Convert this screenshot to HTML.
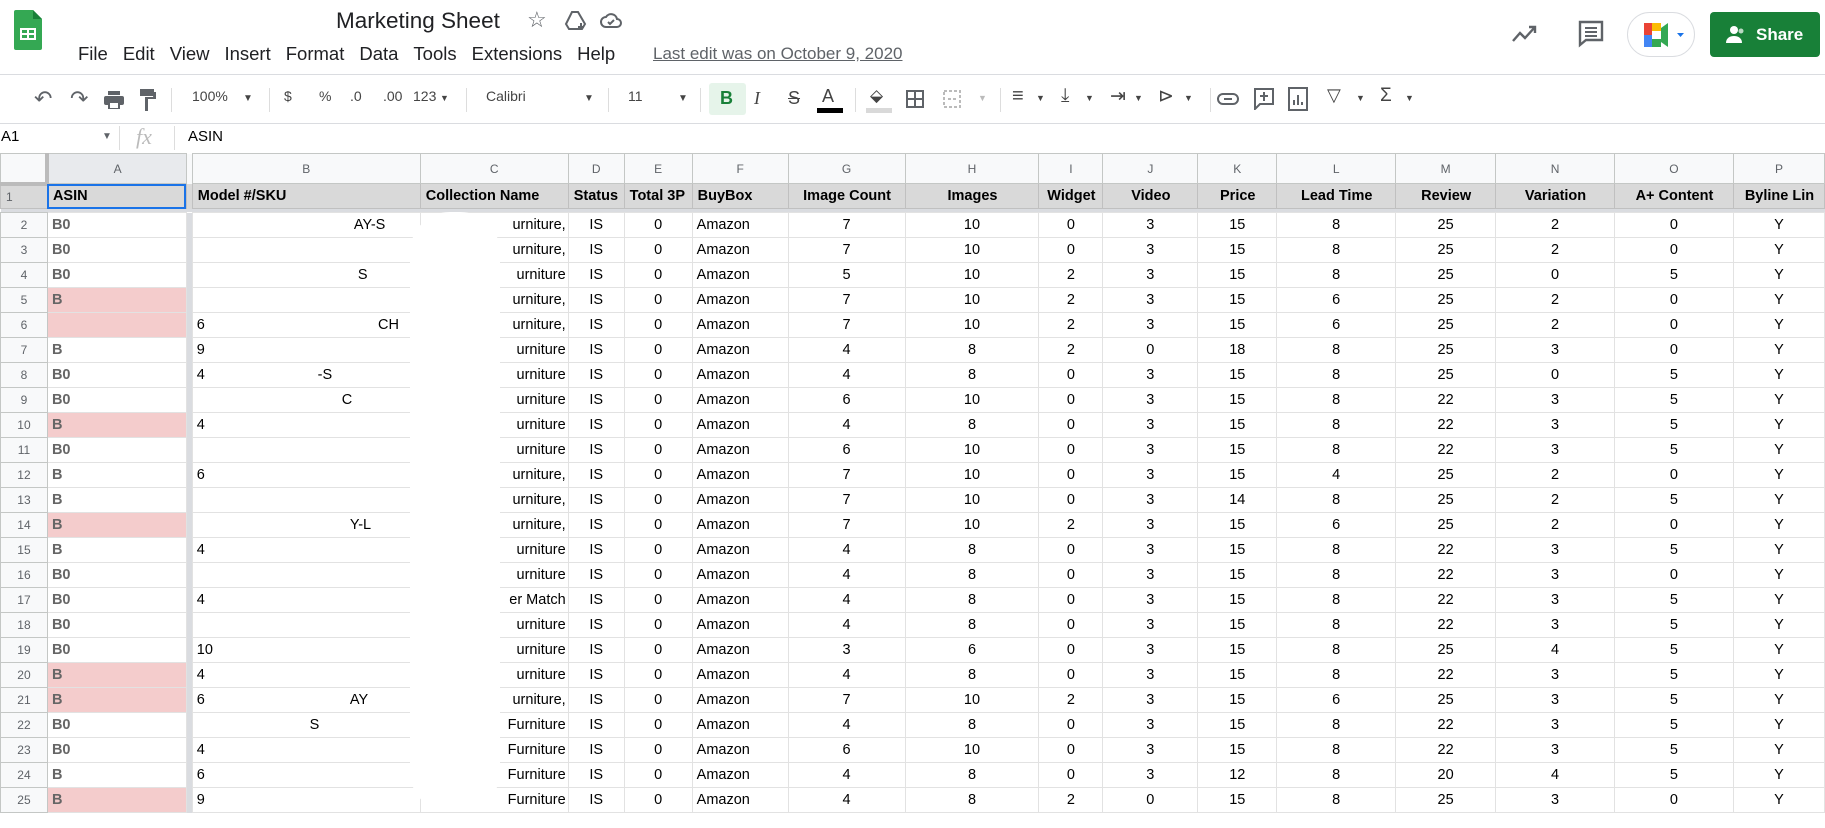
<!DOCTYPE html>
<html><head><meta charset="utf-8"><style>
*{margin:0;padding:0;box-sizing:border-box}
body{width:1825px;height:828px;overflow:hidden;background:#fff;font-family:"Liberation Sans",Arial,sans-serif;color:#000;position:relative}
.a{position:absolute}
.menu span{margin-right:15px}
.tb{position:absolute;top:88px;font-size:14px;color:#444}
.sep{position:absolute;top:88px;width:1px;height:24px;background:#ddd}
table{position:absolute;left:0;top:153px;border-collapse:collapse;table-layout:fixed;font-size:14.5px}
td{border:1px solid #e2e2e2;height:25px;padding:0 4px;white-space:nowrap;overflow:hidden;text-align:center}
tr.h td{height:30px;background:#f8f9fa;color:#5f6368;font-size:12px;border-color:#c4c7c5}
tr.r1 td{background:#d9d9d9;font-weight:bold;text-align:left;border-color:#c0c0c0;padding-left:5px}
tr.sp td{height:4px;background:#dadce0;border:none;padding:0}
td.n{background:#f8f9fa;color:#5f6368;font-size:12px;border-color:#c4c7c5;text-align:center}
td.g{background:#dadce0;border:none;padding:0}
td.A{text-align:left;color:#666;font-weight:bold}
td.p{background:#f4cccc}
td.L{text-align:left}
td.C{text-align:right;padding-right:2px}
</style></head><body>
<svg class="a" style="left:14px;top:10px" width="28" height="40" viewBox="0 0 28 40"><path d="M2 0h17l9 9v29a2 2 0 0 1-2 2H2a2 2 0 0 1-2-2V2a2 2 0 0 1 2-2z" fill="#34a853"/><path d="M19 0v9h9z" fill="#188038"/><rect x="6" y="18" width="16" height="12" fill="#fff"/><rect x="8" y="20" width="5" height="3" fill="#34a853"/><rect x="15" y="20" width="5" height="3" fill="#34a853"/><rect x="8" y="25" width="5" height="3" fill="#34a853"/><rect x="15" y="25" width="5" height="3" fill="#34a853"/></svg>
<div class="a" style="left:336px;top:8px;font-size:22.5px;color:#202124">Marketing Sheet</div>
<div class="a" style="left:527px;top:7px;font-size:22px;color:#5f6368">☆</div>
<svg class="a" style="left:564px;top:10px" width="24" height="22" viewBox="0 0 24 22" fill="none" stroke="#5f6368" stroke-width="2"><path d="M8 2h6l7 12-3 5H5l-3-5z"/><path d="M17 13v7M14 17h6"/></svg>
<svg class="a" style="left:600px;top:12px" width="22" height="16" viewBox="0 0 22 16" fill="none" stroke="#5f6368" stroke-width="2"><path d="M6 15a5 5 0 0 1 0-10 6 6 0 0 1 11 2 4 4 0 0 1 0 8z"/><path d="M8 10l2 2 4-4"/></svg>
<div class="a menu" style="left:78px;top:43px;font-size:18.5px;color:#202124"><span>File</span><span>Edit</span><span>View</span><span>Insert</span><span>Format</span><span>Data</span><span>Tools</span><span>Extensions</span><span>Help</span></div>
<div class="a" style="left:653px;top:44px;font-size:17px;color:#5f6368;text-decoration:underline">Last edit was on October 9, 2020</div>
<svg class="a" style="left:1512px;top:24px" width="26" height="20" viewBox="0 0 26 20" fill="none" stroke="#5f6368" stroke-width="2.4"><path d="M1 17l7-8 5 5 10-11M17 3h6v6"/></svg>
<svg class="a" style="left:1578px;top:20px" width="26" height="28" viewBox="0 0 26 28" fill="none" stroke="#5f6368" stroke-width="2.4"><path d="M2 2h22v18H8l-6 5z"/><path d="M7 8h12M7 12h12M7 16h12" stroke-width="2"/></svg>
<div class="a" style="left:1627px;top:12px;width:68px;height:45px;border:1px solid #dadce0;border-radius:23px"></div>
<svg class="a" style="left:1643px;top:22px" width="44" height="26" viewBox="0 0 44 26"><rect x="1" y="1" width="8" height="12" fill="#ea4335"/><rect x="9" y="1" width="9" height="8" fill="#fbbc04"/><rect x="1" y="13" width="8" height="12" fill="#4285f4"/><rect x="9" y="17" width="9" height="8" fill="#34a853"/><path d="M18 6l7-5v24l-7-5z" fill="#34a853"/><path d="M34 11h7l-3.5 4z" fill="#1a73e8"/></svg>
<div class="a" style="left:1710px;top:12px;width:110px;height:45px;background:#188038;border-radius:4px;color:#fff;font-weight:bold;font-size:17px;line-height:45px;padding-left:46px">Share</div>
<svg class="a" style="left:1726px;top:25px" width="20" height="18" viewBox="0 0 20 18" fill="#fff"><circle cx="8" cy="5" r="4"/><path d="M0 18c0-5 4-7 8-7s8 2 8 7z"/><circle cx="15" cy="6" r="2.5" opacity=".7"/></svg>
<div class="a" style="left:0;top:74px;width:1825px;height:1px;background:#dadce0"></div>
<div class="tb" style="left:34px;top:86px;font-size:22px;color:#5f6368">↶</div>
<div class="tb" style="left:70px;top:86px;font-size:22px;color:#5f6368">↷</div>
<svg class="a" style="left:104px;top:91px" width="20" height="18" viewBox="0 0 20 18" fill="#5f6368"><rect x="4" y="0" width="12" height="4"/><rect x="0" y="5" width="20" height="9" rx="2"/><rect x="5" y="11" width="10" height="7" fill="#fff" stroke="#5f6368" stroke-width="2"/></svg>
<svg class="a" style="left:140px;top:89px" width="16" height="22" viewBox="0 0 16 22" fill="#5f6368"><rect x="0" y="0" width="14" height="7"/><path d="M14 3h2v7H8v12H5V8h8z"/></svg>
<div class="sep" style="left:171px"></div>
<div class="tb" style="left:192px">100%</div><div class="tb" style="left:243px;font-size:10px;top:93px">▼</div>
<div class="sep" style="left:269px"></div>
<div class="tb" style="left:284px">$</div><div class="tb" style="left:319px">%</div>
<div class="tb" style="left:350px">.0</div><div class="tb" style="left:383px">.00</div><div class="tb" style="left:413px">123</div><div class="tb" style="left:440px;font-size:9px;top:93px">▼</div>
<div class="sep" style="left:466px"></div>
<div class="tb" style="left:486px">Calibri</div><div class="tb" style="left:584px;font-size:10px;top:93px">▼</div>
<div class="sep" style="left:608px"></div>
<div class="tb" style="left:628px">11</div><div class="tb" style="left:678px;font-size:10px;top:93px">▼</div>
<div class="sep" style="left:700px"></div>
<div class="a" style="left:709px;top:83px;width:37px;height:32px;background:#e6f4ea;border-radius:3px"></div>
<div class="tb" style="left:720px;top:88px;font-weight:bold;color:#188038;font-size:18px">B</div>
<div class="tb" style="left:754px;top:88px;font-style:italic;font-size:18px;font-family:'Liberation Serif',serif">I</div>
<div class="tb" style="left:788px;top:88px;font-size:18px;text-decoration:line-through">S</div>
<div class="tb" style="left:822px;top:86px;font-size:18px">A</div><div class="a" style="left:817px;top:108px;width:26px;height:5px;background:#000"></div>
<div class="sep" style="left:855px"></div>
<div class="tb" style="left:870px;top:86px;font-size:17px">⬙</div><div class="a" style="left:866px;top:108px;width:26px;height:5px;background:#d9d9d9"></div>
<svg class="a" style="left:906px;top:90px" width="18" height="18" viewBox="0 0 18 18" fill="none" stroke="#5f6368" stroke-width="2"><rect x="1" y="1" width="16" height="16"/><path d="M9 1v16M1 9h16"/></svg>
<svg class="a" style="left:943px;top:90px" width="18" height="18" viewBox="0 0 18 18" fill="none" stroke="#bbb" stroke-width="2" stroke-dasharray="3 2"><rect x="1" y="1" width="16" height="16"/><path d="M5 9h8"/></svg>
<div class="tb" style="left:978px;font-size:9px;top:93px;color:#bbb">▼</div>
<div class="sep" style="left:1000px"></div>
<div class="tb" style="left:1012px;top:85px;font-size:20px">≡</div><div class="tb" style="left:1036px;font-size:9px;top:93px">▼</div>
<div class="tb" style="left:1061px;top:85px;font-size:19px">⤓</div><div class="tb" style="left:1085px;font-size:9px;top:93px">▼</div>
<div class="tb" style="left:1110px;top:85px;font-size:19px">⇥</div><div class="tb" style="left:1134px;font-size:9px;top:93px">▼</div>
<div class="tb" style="left:1158px;top:85px;font-size:19px">⊳</div><div class="tb" style="left:1184px;font-size:9px;top:93px">▼</div>
<div class="sep" style="left:1210px"></div>
<svg class="a" style="left:1217px;top:93px" width="22" height="12" viewBox="0 0 22 12" fill="none" stroke="#5f6368" stroke-width="2"><rect x="1" y="1" width="20" height="10" rx="5"/><path d="M7 6h8"/></svg>
<svg class="a" style="left:1254px;top:88px" width="20" height="22" viewBox="0 0 20 22" fill="none" stroke="#5f6368" stroke-width="2"><path d="M1 1h18v15H6l-5 5z"/><path d="M10 4v9M6 8h8"/></svg>
<svg class="a" style="left:1288px;top:87px" width="20" height="24" viewBox="0 0 20 24" fill="none" stroke="#5f6368" stroke-width="2"><rect x="1" y="1" width="18" height="22"/><path d="M6 18v-5M10 18V8M14 18v-3"/></svg>
<div class="tb" style="left:1327px;top:85px;font-size:18px">▽</div><div class="tb" style="left:1356px;font-size:9px;top:93px">▼</div>
<div class="tb" style="left:1380px;top:85px;font-size:19px">Σ</div><div class="tb" style="left:1405px;font-size:9px;top:93px">▼</div>
<div class="a" style="left:0;top:123px;width:1825px;height:1px;background:#dadce0"></div>
<div class="a" style="left:1px;top:128px;font-size:15px">A1</div>
<div class="a" style="left:102px;top:131px;font-size:10px;color:#5f6368">▼</div>
<div class="a" style="left:119px;top:126px;width:1px;height:24px;background:#ddd"></div>
<div class="a" style="left:136px;top:124px;font-size:22px;color:#bbb;font-style:italic;font-family:'Liberation Serif',serif">fx</div>
<div class="a" style="left:174px;top:126px;width:1px;height:24px;background:#ddd"></div>
<div class="a" style="left:188px;top:128px;font-size:15px">ASIN</div>
<table>
<colgroup><col style="width:47px"><col style="width:139px"><col style="width:6px"><col style="width:228px"><col style="width:148px"><col style="width:56px"><col style="width:68px"><col style="width:96px"><col style="width:117px"><col style="width:134px"><col style="width:64px"><col style="width:95px"><col style="width:79px"><col style="width:119px"><col style="width:100px"><col style="width:119px"><col style="width:119px"><col style="width:91px"></colgroup>
<tr class="h"><td style="border-right:4px solid #bbb;border-bottom:4px solid #bbb"></td><td style="background:#e8eaed">A</td><td class="g"></td><td>B</td><td>C</td><td>D</td><td>E</td><td>F</td><td>G</td><td>H</td><td>I</td><td>J</td><td>K</td><td>L</td><td>M</td><td>N</td><td>O</td><td>P</td></tr>
<tr class="r1"><td class="n" style="font-weight:normal">1</td><td style="outline:2px solid #1a73e8;outline-offset:-2px">ASIN</td><td class="g"></td><td>Model #/SKU</td><td>Collection Name</td><td>Status</td><td>Total 3P</td><td>BuyBox</td><td style="text-align:center">Image Count</td><td style="text-align:center">Images</td><td style="text-align:center">Widget</td><td style="text-align:center">Video</td><td style="text-align:center">Price</td><td style="text-align:center">Lead Time</td><td style="text-align:center">Review</td><td style="text-align:center">Variation</td><td style="text-align:center">A+ Content</td><td style="text-align:center">Byline Lin</td></tr>
<tr class="sp"><td colspan="18"></td></tr>
<tr><td class="n">2</td><td class="A">B0</td><td class="g"></td><td class="L">&nbsp;&nbsp;&nbsp;&nbsp;&nbsp;&nbsp;&nbsp;&nbsp;&nbsp;&nbsp;&nbsp;&nbsp;&nbsp;&nbsp;&nbsp;&nbsp;&nbsp;&nbsp;&nbsp;&nbsp;&nbsp;&nbsp;&nbsp;&nbsp;&nbsp;&nbsp;&nbsp;&nbsp;&nbsp;&nbsp;&nbsp;&nbsp;&nbsp;&nbsp;&nbsp;&nbsp;&nbsp;&nbsp;&nbsp;AY-S</td><td class="C">urniture,</td><td>IS</td><td>0</td><td class="L">Amazon</td><td>7</td><td>10</td><td>0</td><td>3</td><td>15</td><td>8</td><td>25</td><td>2</td><td>0</td><td>Y</td></tr>
<tr><td class="n">3</td><td class="A">B0</td><td class="g"></td><td class="L"></td><td class="C">urniture,</td><td>IS</td><td>0</td><td class="L">Amazon</td><td>7</td><td>10</td><td>0</td><td>3</td><td>15</td><td>8</td><td>25</td><td>2</td><td>0</td><td>Y</td></tr>
<tr><td class="n">4</td><td class="A">B0</td><td class="g"></td><td class="L">&nbsp;&nbsp;&nbsp;&nbsp;&nbsp;&nbsp;&nbsp;&nbsp;&nbsp;&nbsp;&nbsp;&nbsp;&nbsp;&nbsp;&nbsp;&nbsp;&nbsp;&nbsp;&nbsp;&nbsp;&nbsp;&nbsp;&nbsp;&nbsp;&nbsp;&nbsp;&nbsp;&nbsp;&nbsp;&nbsp;&nbsp;&nbsp;&nbsp;&nbsp;&nbsp;&nbsp;&nbsp;&nbsp;&nbsp;&nbsp;S</td><td class="C">urniture</td><td>IS</td><td>0</td><td class="L">Amazon</td><td>5</td><td>10</td><td>2</td><td>3</td><td>15</td><td>8</td><td>25</td><td>0</td><td>5</td><td>Y</td></tr>
<tr><td class="n">5</td><td class="A p">B</td><td class="g"></td><td class="L"></td><td class="C">urniture,</td><td>IS</td><td>0</td><td class="L">Amazon</td><td>7</td><td>10</td><td>2</td><td>3</td><td>15</td><td>6</td><td>25</td><td>2</td><td>0</td><td>Y</td></tr>
<tr><td class="n">6</td><td class="A p"></td><td class="g"></td><td class="L">6&nbsp;&nbsp;&nbsp;&nbsp;&nbsp;&nbsp;&nbsp;&nbsp;&nbsp;&nbsp;&nbsp;&nbsp;&nbsp;&nbsp;&nbsp;&nbsp;&nbsp;&nbsp;&nbsp;&nbsp;&nbsp;&nbsp;&nbsp;&nbsp;&nbsp;&nbsp;&nbsp;&nbsp;&nbsp;&nbsp;&nbsp;&nbsp;&nbsp;&nbsp;&nbsp;&nbsp;&nbsp;&nbsp;&nbsp;&nbsp;&nbsp;&nbsp;&nbsp;CH</td><td class="C">urniture,</td><td>IS</td><td>0</td><td class="L">Amazon</td><td>7</td><td>10</td><td>2</td><td>3</td><td>15</td><td>6</td><td>25</td><td>2</td><td>0</td><td>Y</td></tr>
<tr><td class="n">7</td><td class="A">B</td><td class="g"></td><td class="L">9</td><td class="C">urniture</td><td>IS</td><td>0</td><td class="L">Amazon</td><td>4</td><td>8</td><td>2</td><td>0</td><td>18</td><td>8</td><td>25</td><td>3</td><td>0</td><td>Y</td></tr>
<tr><td class="n">8</td><td class="A">B0</td><td class="g"></td><td class="L">4&nbsp;&nbsp;&nbsp;&nbsp;&nbsp;&nbsp;&nbsp;&nbsp;&nbsp;&nbsp;&nbsp;&nbsp;&nbsp;&nbsp;&nbsp;&nbsp;&nbsp;&nbsp;&nbsp;&nbsp;&nbsp;&nbsp;&nbsp;&nbsp;&nbsp;&nbsp;&nbsp;&nbsp;-S</td><td class="C">urniture</td><td>IS</td><td>0</td><td class="L">Amazon</td><td>4</td><td>8</td><td>0</td><td>3</td><td>15</td><td>8</td><td>25</td><td>0</td><td>5</td><td>Y</td></tr>
<tr><td class="n">9</td><td class="A">B0</td><td class="g"></td><td class="L">&nbsp;&nbsp;&nbsp;&nbsp;&nbsp;&nbsp;&nbsp;&nbsp;&nbsp;&nbsp;&nbsp;&nbsp;&nbsp;&nbsp;&nbsp;&nbsp;&nbsp;&nbsp;&nbsp;&nbsp;&nbsp;&nbsp;&nbsp;&nbsp;&nbsp;&nbsp;&nbsp;&nbsp;&nbsp;&nbsp;&nbsp;&nbsp;&nbsp;&nbsp;&nbsp;&nbsp;C</td><td class="C">urniture</td><td>IS</td><td>0</td><td class="L">Amazon</td><td>6</td><td>10</td><td>0</td><td>3</td><td>15</td><td>8</td><td>22</td><td>3</td><td>5</td><td>Y</td></tr>
<tr><td class="n">10</td><td class="A p">B</td><td class="g"></td><td class="L">4</td><td class="C">urniture</td><td>IS</td><td>0</td><td class="L">Amazon</td><td>4</td><td>8</td><td>0</td><td>3</td><td>15</td><td>8</td><td>22</td><td>3</td><td>5</td><td>Y</td></tr>
<tr><td class="n">11</td><td class="A">B0</td><td class="g"></td><td class="L"></td><td class="C">urniture</td><td>IS</td><td>0</td><td class="L">Amazon</td><td>6</td><td>10</td><td>0</td><td>3</td><td>15</td><td>8</td><td>22</td><td>3</td><td>5</td><td>Y</td></tr>
<tr><td class="n">12</td><td class="A">B</td><td class="g"></td><td class="L">6</td><td class="C">urniture,</td><td>IS</td><td>0</td><td class="L">Amazon</td><td>7</td><td>10</td><td>0</td><td>3</td><td>15</td><td>4</td><td>25</td><td>2</td><td>0</td><td>Y</td></tr>
<tr><td class="n">13</td><td class="A">B</td><td class="g"></td><td class="L"></td><td class="C">urniture,</td><td>IS</td><td>0</td><td class="L">Amazon</td><td>7</td><td>10</td><td>0</td><td>3</td><td>14</td><td>8</td><td>25</td><td>2</td><td>5</td><td>Y</td></tr>
<tr><td class="n">14</td><td class="A p">B</td><td class="g"></td><td class="L">&nbsp;&nbsp;&nbsp;&nbsp;&nbsp;&nbsp;&nbsp;&nbsp;&nbsp;&nbsp;&nbsp;&nbsp;&nbsp;&nbsp;&nbsp;&nbsp;&nbsp;&nbsp;&nbsp;&nbsp;&nbsp;&nbsp;&nbsp;&nbsp;&nbsp;&nbsp;&nbsp;&nbsp;&nbsp;&nbsp;&nbsp;&nbsp;&nbsp;&nbsp;&nbsp;&nbsp;&nbsp;&nbsp;Y-L</td><td class="C">urniture,</td><td>IS</td><td>0</td><td class="L">Amazon</td><td>7</td><td>10</td><td>2</td><td>3</td><td>15</td><td>6</td><td>25</td><td>2</td><td>0</td><td>Y</td></tr>
<tr><td class="n">15</td><td class="A">B</td><td class="g"></td><td class="L">4</td><td class="C">urniture</td><td>IS</td><td>0</td><td class="L">Amazon</td><td>4</td><td>8</td><td>0</td><td>3</td><td>15</td><td>8</td><td>22</td><td>3</td><td>5</td><td>Y</td></tr>
<tr><td class="n">16</td><td class="A">B0</td><td class="g"></td><td class="L"></td><td class="C">urniture</td><td>IS</td><td>0</td><td class="L">Amazon</td><td>4</td><td>8</td><td>0</td><td>3</td><td>15</td><td>8</td><td>22</td><td>3</td><td>0</td><td>Y</td></tr>
<tr><td class="n">17</td><td class="A">B0</td><td class="g"></td><td class="L">4</td><td class="C">er Match</td><td>IS</td><td>0</td><td class="L">Amazon</td><td>4</td><td>8</td><td>0</td><td>3</td><td>15</td><td>8</td><td>22</td><td>3</td><td>5</td><td>Y</td></tr>
<tr><td class="n">18</td><td class="A">B0</td><td class="g"></td><td class="L"></td><td class="C">urniture</td><td>IS</td><td>0</td><td class="L">Amazon</td><td>4</td><td>8</td><td>0</td><td>3</td><td>15</td><td>8</td><td>22</td><td>3</td><td>5</td><td>Y</td></tr>
<tr><td class="n">19</td><td class="A">B0</td><td class="g"></td><td class="L">10</td><td class="C">urniture</td><td>IS</td><td>0</td><td class="L">Amazon</td><td>3</td><td>6</td><td>0</td><td>3</td><td>15</td><td>8</td><td>25</td><td>4</td><td>5</td><td>Y</td></tr>
<tr><td class="n">20</td><td class="A p">B</td><td class="g"></td><td class="L">4</td><td class="C">urniture</td><td>IS</td><td>0</td><td class="L">Amazon</td><td>4</td><td>8</td><td>0</td><td>3</td><td>15</td><td>8</td><td>22</td><td>3</td><td>5</td><td>Y</td></tr>
<tr><td class="n">21</td><td class="A p">B</td><td class="g"></td><td class="L">6&nbsp;&nbsp;&nbsp;&nbsp;&nbsp;&nbsp;&nbsp;&nbsp;&nbsp;&nbsp;&nbsp;&nbsp;&nbsp;&nbsp;&nbsp;&nbsp;&nbsp;&nbsp;&nbsp;&nbsp;&nbsp;&nbsp;&nbsp;&nbsp;&nbsp;&nbsp;&nbsp;&nbsp;&nbsp;&nbsp;&nbsp;&nbsp;&nbsp;&nbsp;&nbsp;&nbsp;AY</td><td class="C">urniture,</td><td>IS</td><td>0</td><td class="L">Amazon</td><td>7</td><td>10</td><td>2</td><td>3</td><td>15</td><td>6</td><td>25</td><td>3</td><td>5</td><td>Y</td></tr>
<tr><td class="n">22</td><td class="A">B0</td><td class="g"></td><td class="L">&nbsp;&nbsp;&nbsp;&nbsp;&nbsp;&nbsp;&nbsp;&nbsp;&nbsp;&nbsp;&nbsp;&nbsp;&nbsp;&nbsp;&nbsp;&nbsp;&nbsp;&nbsp;&nbsp;&nbsp;&nbsp;&nbsp;&nbsp;&nbsp;&nbsp;&nbsp;&nbsp;&nbsp;S</td><td class="C">Furniture</td><td>IS</td><td>0</td><td class="L">Amazon</td><td>4</td><td>8</td><td>0</td><td>3</td><td>15</td><td>8</td><td>22</td><td>3</td><td>5</td><td>Y</td></tr>
<tr><td class="n">23</td><td class="A">B0</td><td class="g"></td><td class="L">4</td><td class="C">Furniture</td><td>IS</td><td>0</td><td class="L">Amazon</td><td>6</td><td>10</td><td>0</td><td>3</td><td>15</td><td>8</td><td>22</td><td>3</td><td>5</td><td>Y</td></tr>
<tr><td class="n">24</td><td class="A">B</td><td class="g"></td><td class="L">6</td><td class="C">Furniture</td><td>IS</td><td>0</td><td class="L">Amazon</td><td>4</td><td>8</td><td>0</td><td>3</td><td>12</td><td>8</td><td>20</td><td>4</td><td>5</td><td>Y</td></tr>
<tr><td class="n">25</td><td class="A p">B</td><td class="g"></td><td class="L">9</td><td class="C">Furniture</td><td>IS</td><td>0</td><td class="L">Amazon</td><td>4</td><td>8</td><td>2</td><td>0</td><td>15</td><td>8</td><td>25</td><td>3</td><td>0</td><td>Y</td></tr>
</table>
<div class="a" style="left:410px;top:212px;width:90px;height:600px;background:#fff;border-radius:40px"></div>
</body></html>
